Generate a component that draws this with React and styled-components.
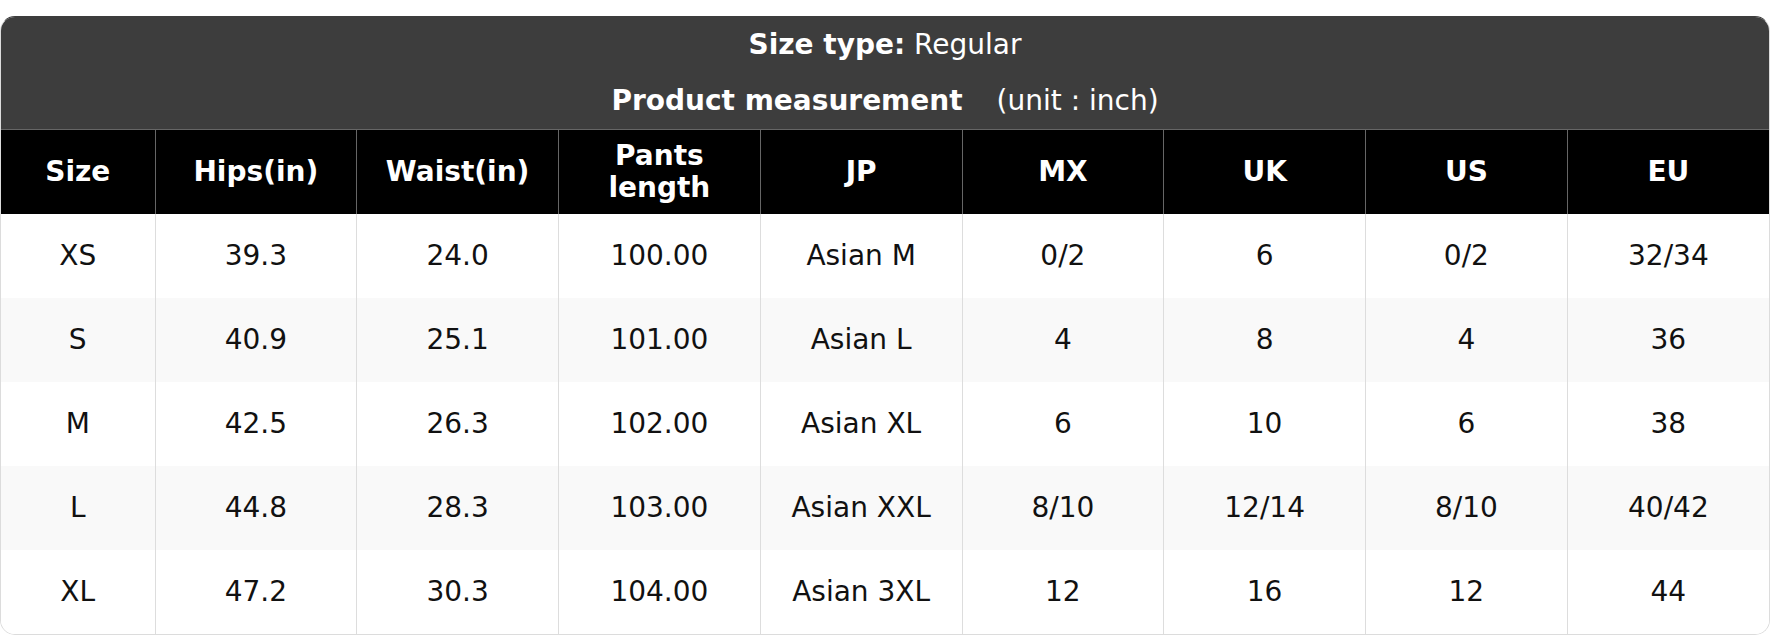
import React from 'react'
import styled, { createGlobalStyle } from 'styled-components'

const GlobalStyle = createGlobalStyle`
  body {
    margin: 0;
    background: #fff;
    font-family: "DejaVu Sans", Verdana, sans-serif;
  }
`

const Card = styled.div`
  margin-top: 16px;
  border: 1px solid #dcdcdc;
  border-top-color: #3d3d3d;
  border-radius: 15px;
  overflow: hidden;
  background: #fff;
`

const Caption = styled.div`
  background: #3d3d3d;
  color: #fff;
  text-align: center;
  font-size: 28px;
`

const CaptionLine = styled.div`
  height: 56px;
  line-height: 56px;
`

const Unit = styled.span`
  margin-left: 34px;
`

const Table = styled.table`
  width: 100%;
  border-collapse: collapse;
  table-layout: fixed;
  font-size: 28px;
`

const Th = styled.th`
  background: #000;
  color: #fff;
  font-weight: bold;
  line-height: 1.15;
  padding: 10px 8px;
  border-top: 1px solid #666;
  border-left: 1px solid #666;
  &:first-child {
    border-left: none;
  }
`

const Row = styled.tr`
  background: ${props => (props.$striped ? '#f9f9f9' : '#fff')};
`

const Td = styled.td`
  text-align: center;
  color: #111;
  line-height: 32px;
  padding: 26px 8px;
  border-left: 1px solid #ddd;
  &:first-child {
    border-left: none;
  }
`

const columns = ['Size', 'Hips(in)', 'Waist(in)', 'Pants length', 'JP', 'MX', 'UK', 'US', 'EU']

const rows = [
  ['XS', '39.3', '24.0', '100.00', 'Asian M', '0/2', '6', '0/2', '32/34'],
  ['S', '40.9', '25.1', '101.00', 'Asian L', '4', '8', '4', '36'],
  ['M', '42.5', '26.3', '102.00', 'Asian XL', '6', '10', '6', '38'],
  ['L', '44.8', '28.3', '103.00', 'Asian XXL', '8/10', '12/14', '8/10', '40/42'],
  ['XL', '47.2', '30.3', '104.00', 'Asian 3XL', '12', '16', '12', '44']
]

const App = () => (
  <>
    <GlobalStyle />
    <Card>
      <Caption>
        <CaptionLine>
          <b>Size type:</b> Regular
        </CaptionLine>
        <CaptionLine>
          <b>Product measurement</b>
          <Unit>(unit : inch)</Unit>
        </CaptionLine>
      </Caption>
      <Table>
        <colgroup>
          <col style={{ width: '154px' }} />
          {columns.slice(1).map(c => (
            <col key={c} />
          ))}
        </colgroup>
        <thead>
          <tr>
            {columns.map(c => (
              <Th key={c}>{c}</Th>
            ))}
          </tr>
        </thead>
        <tbody>
          {rows.map((r, i) => (
            <Row key={r[0]} $striped={i % 2 === 1}>
              {r.map((v, j) => (
                <Td key={j}>{v}</Td>
              ))}
            </Row>
          ))}
        </tbody>
      </Table>
    </Card>
  </>
)

export default App
